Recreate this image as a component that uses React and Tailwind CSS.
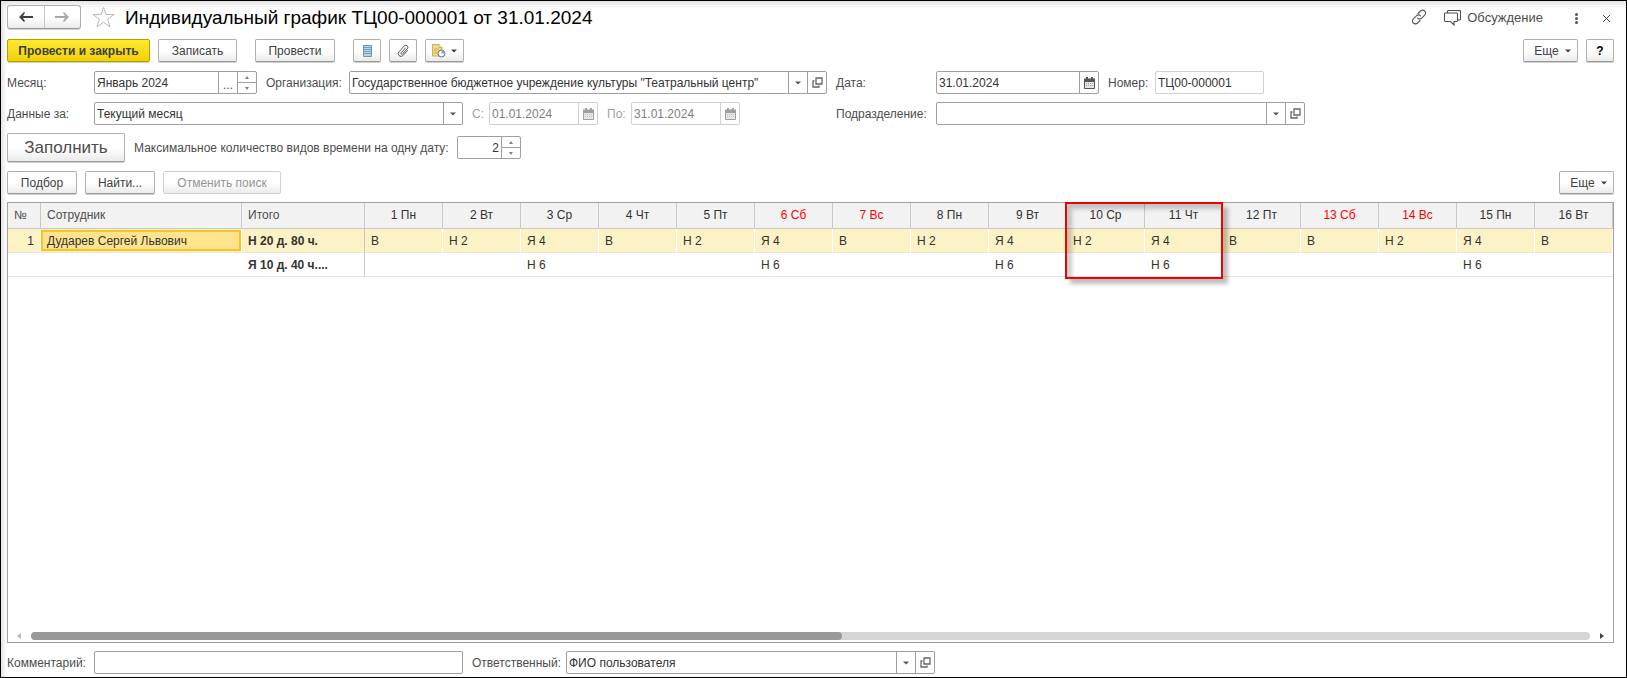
import clsx from "clsx";

const days = [
  { title: "1 Пн", top: "В" },
  { title: "2 Вт", top: "Н 2" },
  { title: "3 Ср", top: "Я 4", bottom: "Н 6" },
  { title: "4 Чт", top: "В" },
  { title: "5 Пт", top: "Н 2" },
  { title: "6 Сб", top: "Я 4", bottom: "Н 6", weekend: true },
  { title: "7 Вс", top: "В", weekend: true },
  { title: "8 Пн", top: "Н 2" },
  { title: "9 Вт", top: "Я 4", bottom: "Н 6" },
  { title: "10 Ср", top: "Н 2", marked: true },
  { title: "11 Чт", top: "Я 4", bottom: "Н 6" },
  { title: "12 Пт", top: "В" },
  { title: "13 Сб", top: "В", weekend: true },
  { title: "14 Вс", top: "Н 2", weekend: true },
  { title: "15 Пн", top: "Я 4", bottom: "Н 6" },
  { title: "16 Вт", top: "В" },
];

function CaretDown({ className }) {
  return (
    <svg width="6" height="4" viewBox="0 0 6 4" className={className} aria-hidden="true">
      <path d="M0 0.5h6L3 3.5z" fill="currentColor" />
    </svg>
  );
}

function CalendarIcon() {
  return (
    <svg width="11" height="12" viewBox="0 0 11 12" aria-hidden="true">
      <path d="M0.5 4.5h10v7h-10z" fill="#e6e6e6" stroke="currentColor" />
      <path d="M0 1.5h11V5H0zM2 0h2v2H2zM7 0h2v2H7z" fill="currentColor" />
      <path d="M2 6.5h7M2 8.5h7" stroke="currentColor" strokeOpacity="0.5" strokeDasharray="1 1" />
    </svg>
  );
}

function OpenIcon() {
  return (
    <svg width="11" height="11" viewBox="0 0 11 11" fill="none" stroke="#666" strokeWidth="1.3" aria-hidden="true">
      <path d="M4 1h6v6H4z" />
      <path d="M2.5 4H1v6h6V8.5" />
    </svg>
  );
}

function Button({ className, children, ...props }) {
  return (
    <button
      type="button"
      className={clsx(
        "flex shrink-0 items-center justify-center rounded-[2px] border border-[#b0b0b0] border-b-[#9a9a9a] bg-linear-to-b from-white from-50% to-[#ebebeb] shadow-[0_1px_0_#d0d0d0]",
        "disabled:border-[#d0d0d0] disabled:text-[#949494] disabled:shadow-none",
        className
      )}
      {...props}
    >
      {children}
    </button>
  );
}

function Field({ className, muted, children }) {
  return (
    <div
      className={clsx(
        "flex h-[23px] shrink-0 overflow-hidden rounded-[2px] border bg-white",
        muted ? "border-[#d0d0d0] text-[#808080]" : "border-[#a0a0a0] text-[#333]",
        className
      )}
    >
      {children}
    </div>
  );
}

function TextInput({ className, ...props }) {
  return <input type="text" className={clsx("min-w-0 flex-1 px-[2px] outline-none", className)} {...props} />;
}

function FieldButton({ label, muted, children }) {
  return (
    <button
      type="button"
      aria-label={label}
      disabled={muted}
      className={clsx(
        "flex w-[19px] shrink-0 items-center justify-center border-l",
        muted ? "border-[#d0d0d0] text-[#a0a0a0]" : "border-[#a0a0a0] text-[#555]"
      )}
    >
      {children}
    </button>
  );
}

function Spinner() {
  return (
    <div className="flex w-[19px] shrink-0 flex-col border-l border-[#a0a0a0] text-[#808080]">
      <button type="button" aria-label="Больше" className="flex flex-1 items-center justify-center border-b border-[#a0a0a0]">
        <svg width="4" height="3" viewBox="0 0 4 3" aria-hidden="true">
          <path d="M0 3h4L2 0z" fill="currentColor" />
        </svg>
      </button>
      <button type="button" aria-label="Меньше" className="flex flex-1 items-center justify-center">
        <svg width="4" height="3" viewBox="0 0 4 3" aria-hidden="true">
          <path d="M0 0h4L2 3z" fill="currentColor" />
        </svg>
      </button>
    </div>
  );
}

function TitleBar() {
  return (
    <header className="flex h-6 items-center">
      <div className="flex h-6 w-[74px] rounded-[3px] border border-[#b0b0b0] border-b-[#9a9a9a] bg-linear-to-b from-white from-50% to-[#ebebeb] shadow-[0_1px_0_#d0d0d0]">
        <button type="button" aria-label="Назад" className="flex flex-1 items-center justify-center border-r border-[#c8c8c8]">
          <svg width="14" height="10" viewBox="0 0 14 10" aria-hidden="true">
            <path d="M5 0 0 5l5 5 1-1-2-3h10V4H4l2-3z" fill="#404040" />
          </svg>
        </button>
        <button type="button" aria-label="Вперед" className="flex flex-1 items-center justify-center">
          <svg width="14" height="10" viewBox="0 0 14 10" aria-hidden="true">
            <path d="m9 0 5 5-5 5-1-1 2-3H0V4h10L8 1z" fill="#a8a8a8" />
          </svg>
        </button>
      </div>
      <button type="button" aria-label="В избранное" className="ml-[11px]">
        <svg width="23" height="22" viewBox="0 0 23 22" fill="#fff" stroke="#b4bac0" aria-hidden="true">
          <path d="m11.5 1.500 2.500 7h8l-6.300 4.700 2.300 7.600-6.500-4.500-6.500 4.500 2.300-7.600L1 8.500h8z" />
        </svg>
      </button>
      <h1 className="ml-[10px] flex-1 pt-[2px] text-[19px] leading-[22px] whitespace-nowrap text-black">
        Индивидуальный график ТЦ00-000001 от 31.01.2024
      </h1>
      <button type="button" aria-label="Получить ссылку">
        <svg width="16" height="16" viewBox="0 0 16 16" fill="none" stroke="#555" strokeWidth="1.1" strokeLinecap="round" aria-hidden="true">
          <path d="m7 4.500 2.500-2.500a2.900 2.900 0 0 1 4.200 0 2.900 2.900 0 0 1 0 4.200l-3 3a2.900 2.900 0 0 1-4.200 0" />
          <path d="m9 11.500-2.500 2.500a2.900 2.900 0 0 1-4.200 0 2.900 2.900 0 0 1 0-4.200l3-3a2.900 2.900 0 0 1 4.200 0" />
        </svg>
      </button>
      <button type="button" className="ml-[17px] flex items-center gap-[6px] pt-[2px] text-[13px] text-[#4d4d4d]">
        <svg width="17" height="16" viewBox="0 0 17 16" fill="none" stroke="#4d4d4d" strokeWidth="1.1" aria-hidden="true">
          <path d="M3.500 3V1.500q0-1 1-1h11q1 0 1 1V9q0 1-1 1h-2" />
          <path d="M1.500 3h11q1 0 1 1v6.500q0 1-1 1H10V15l-3.500-3.500h-5q-1 0-1-1V4q0-1 1-1z" fill="#fff" />
        </svg>
        Обсуждение
      </button>
      <button type="button" aria-label="Меню" className="ml-8 flex flex-col gap-px pt-[2px]">
        <span className="size-[3px] rounded-full bg-[#555]" />
        <span className="size-[3px] rounded-full bg-[#555]" />
        <span className="size-[3px] rounded-full bg-[#555]" />
      </button>
      <button type="button" aria-label="Закрыть" className="mr-1 ml-[25px] pt-[2px]">
        <svg width="7" height="7" viewBox="0 0 7 7" stroke="#444" aria-hidden="true">
          <path d="m0 0 7 7M7 0 0 7" />
        </svg>
      </button>
    </header>
  );
}

function Toolbar() {
  return (
    <div className="mt-[10px] flex items-center">
      <button
        type="button"
        className="h-[23px] w-[143px] rounded-[2px] border border-[#b59f00] bg-linear-to-b from-[#ffe82e] to-[#f2d100] font-bold whitespace-nowrap text-[#404040] shadow-[0_1px_0_#d0d0d0]"
      >
        Провести и закрыть
      </button>
      <Button className="ml-2 h-[23px] w-[79px]">Записать</Button>
      <Button className="ml-[18px] h-[23px] w-[80px]">Провести</Button>
      <Button className="ml-[18px] h-[23px] w-7" aria-label="Движения документа">
        <svg width="9" height="12" viewBox="0 0 9 12" aria-hidden="true">
          <path d="M0.500 0.500h8v11h-8z" fill="#b9d3e6" stroke="#6d93b0" />
          <path d="M1 2.500h7M1 4.500h7M1 6.500h7M1 8.500h7" stroke="#6d93b0" strokeOpacity="0.8" />
        </svg>
      </Button>
      <Button className="ml-2 h-[23px] w-7" aria-label="Присоединенные файлы">
        <svg width="12" height="13" viewBox="0 0 12 13" fill="none" stroke="#555" strokeLinecap="round" aria-hidden="true">
          <path d="m8.500 4-4.300 4.700a.9.900 0 0 0 1.300 1.300l4.800-5.300a2 2 0 0 0-3-2.800L2 7.800a2.700 2.700 0 0 0 4 3.700L10.500 6.500" />
        </svg>
      </Button>
      <Button className="ml-2 h-[23px] w-[39px] gap-[5px]" aria-label="Создать на основании">
        <svg width="14" height="14" viewBox="0 0 14 14" aria-hidden="true">
          <path d="M0.500 0.500h6.500l3 3v8.500h-9.500z" fill="#f3d98a" stroke="#d0b050" />
          <path d="M7 0.500v3h3" fill="#fff3c4" stroke="#d0b050" />
          <path d="M2 5h5M2 7h3M2 9h3" stroke="#d0b050" />
          <circle cx="9.500" cy="9.500" r="3.500" fill="#fff" stroke="#5a7086" />
          <path d="M9.500 9.500V6a3.500 3.500 0 0 1 3.500 3.500z" fill="#7ba7d0" />
        </svg>
        <CaretDown />
      </Button>
      <Button className="ml-auto h-[23px] w-[55px] gap-[6px] pl-1">
        Еще <CaretDown />
      </Button>
      <Button className="ml-2 h-[23px] w-7 font-bold text-black">?</Button>
    </div>
  );
}

function HeaderFields() {
  return (
    <div className="mt-[9px] grid grid-cols-[829px_1fr] gap-y-2 text-[#4d4d4d]">
      <div className="flex items-center">
        <label htmlFor="month" className="w-[87px] shrink-0">Месяц:</label>
        <Field className="w-[163px]">
          <TextInput id="month" defaultValue="Январь 2024" />
          <FieldButton label="Выбрать месяц">
            <span className="pt-1">...</span>
          </FieldButton>
          <Spinner />
        </Field>
        <label htmlFor="org" className="ml-[9px] w-[83px] shrink-0">Организация:</label>
        <Field className="w-[478px]">
          <TextInput id="org" defaultValue={'Государственное бюджетное учреждение культуры "Театральный центр"'} />
          <FieldButton label="Выбрать организацию"><CaretDown /></FieldButton>
          <FieldButton label="Открыть организацию"><OpenIcon /></FieldButton>
        </Field>
      </div>
      <div className="flex items-center">
        <label htmlFor="date" className="w-[100px] shrink-0">Дата:</label>
        <Field className="w-[163px]">
          <TextInput id="date" defaultValue="31.01.2024" />
          <FieldButton label="Календарь"><CalendarIcon /></FieldButton>
        </Field>
        <label htmlFor="number" className="ml-[9px] w-[47px] shrink-0">Номер:</label>
        <Field className="w-[109px] border-[#d0d0d0]">
          <TextInput id="number" defaultValue="ТЦ00-000001" />
        </Field>
      </div>
      <div className="flex items-center">
        <label htmlFor="source" className="w-[87px] shrink-0">Данные за:</label>
        <Field className="w-[369px]">
          <select id="source" className="flex-1 appearance-none px-[2px] outline-none">
            <option>Текущий месяц</option>
          </select>
          <span className="pointer-events-none flex w-[19px] items-center justify-center border-l border-[#a0a0a0] text-[#555]">
            <CaretDown />
          </span>
        </Field>
        <label htmlFor="from" className="ml-[9px] w-[17px] shrink-0 text-[#a0a0a0]">С:</label>
        <Field className="w-[109px]" muted>
          <TextInput id="from" defaultValue="01.01.2024" disabled />
          <FieldButton label="Календарь" muted><CalendarIcon /></FieldButton>
        </Field>
        <label htmlFor="to" className="ml-[9px] w-[24px] shrink-0 text-[#a0a0a0]">По:</label>
        <Field className="w-[109px]" muted>
          <TextInput id="to" defaultValue="31.01.2024" disabled />
          <FieldButton label="Календарь" muted><CalendarIcon /></FieldButton>
        </Field>
      </div>
      <div className="flex items-center">
        <label htmlFor="department" className="w-[100px] shrink-0">Подразделение:</label>
        <Field className="w-[369px]">
          <TextInput id="department" />
          <FieldButton label="Выбрать подразделение"><CaretDown /></FieldButton>
          <FieldButton label="Открыть подразделение"><OpenIcon /></FieldButton>
        </Field>
      </div>
    </div>
  );
}

function Schedule() {
  const cell = "truncate pl-[6px] text-left";
  return (
    <div className="mt-2 flex flex-1 flex-col border border-[#a0a0a0] bg-white text-[#333]">
      <table className="w-full table-fixed border-separate border-spacing-0">
        <colgroup>
          <col className="w-[33px]" />
          <col className="w-[201px]" />
          <col className="w-[123px]" />
          {days.map((day) => (
            <col key={day.title} />
          ))}
        </colgroup>
        <thead>
          <tr className="h-[26px] text-[#4d4d4d] [&>th]:border-r [&>th]:border-b [&>th]:border-[#c8c8c8] [&>th]:bg-[#f2f2f2] [&>th]:pb-[2px] [&>th]:font-normal">
            <th className={cell}>№</th>
            <th className={cell}>Сотрудник</th>
            <th className={cell}>Итого</th>
            {days.map((day) => (
              <th key={day.title} className={clsx("relative", day.weekend ? "text-[#ff0000]" : "text-[#333]")}>
                {day.title}
                {day.marked && (
                  <span className="pointer-events-none absolute -top-px -left-[2px] z-10 h-[77px] w-[calc(200%+4px)] border-2 border-[#f00000] shadow-[5px_5px_4px_rgba(0,0,0,0.25),inset_5px_5px_4px_rgba(0,0,0,0.2)]" />
                )}
              </th>
            ))}
          </tr>
        </thead>
        <tbody>
          <tr className="h-6 [&>td]:border-r [&>td]:border-b [&>td]:border-r-white [&>td]:border-b-[#e4e4e4] [&>td]:bg-[#fdf1c6]">
            <td className="pr-[6px] text-right">1</td>
            <td className="p-0">
              <div className="h-[21px] border-2 border-[#f9c51d] bg-[#ffe48f] pl-1 leading-[18px]">Дударев Сергей Львович</div>
            </td>
            <td className={clsx(cell, "border-r-[#c8c8c8]! font-bold")}>Н 20 д. 80 ч.</td>
            {days.map((day) => (
              <td key={day.title} className={cell}>{day.top}</td>
            ))}
          </tr>
          <tr className="h-6 [&>td]:border-b [&>td]:border-[#e4e4e4]">
            <td />
            <td />
            <td className={clsx(cell, "border-r border-r-[#c8c8c8]! font-bold")}>Я 10 д. 40 ч....</td>
            {days.map((day) => (
              <td key={day.title} className={cell}>{day.bottom}</td>
            ))}
          </tr>
        </tbody>
      </table>
      <div className="mt-auto flex items-center pr-[9px] pb-[2px] pl-[9px]">
        <svg width="4" height="6" viewBox="0 0 4 6" aria-hidden="true">
          <path d="M4 0v6L0 3z" fill="#b8b8b8" />
        </svg>
        <div className="mr-[10px] ml-[10px] h-2 flex-1 rounded-full bg-[#d5d5d5]">
          <div className="h-2 w-[52%] rounded-full bg-[#999]" />
        </div>
        <svg width="4" height="6" viewBox="0 0 4 6" aria-hidden="true">
          <path d="M0 0v6l4-3z" fill="#444" />
        </svg>
      </div>
    </div>
  );
}

export default function App() {
  return (
    <div className="flex min-h-screen flex-col border border-black bg-white bg-[linear-gradient(to_right,#e4e4e4,transparent_6px),linear-gradient(to_bottom,#e4e4e4,transparent_8px)] px-[6px] pt-1 pr-3 pb-[3px] font-['Liberation_Sans',Arial,sans-serif] text-[12px] leading-4 text-[#404040]">
      <TitleBar />
      <Toolbar />
      <HeaderFields />
      <div className="mt-2 flex items-center text-[#4d4d4d]">
        <Button className="h-[29px] w-[118px] text-[17px]">Заполнить</Button>
        <label htmlFor="limit" className="ml-[9px] w-[323px] whitespace-nowrap">
          Максимальное количество видов времени на одну дату:
        </label>
        <Field className="w-16">
          <TextInput id="limit" defaultValue="2" className="text-right" />
          <Spinner />
        </Field>
      </div>
      <div className="mt-[9px] flex items-center gap-2">
        <Button className="h-[23px] w-[70px]">Подбор</Button>
        <Button className="h-[23px] w-[70px]">Найти...</Button>
        <Button className="h-[23px] w-[118px]" disabled>Отменить поиск</Button>
        <Button className="ml-auto h-[23px] w-[55px] gap-[6px] pl-1">
          Еще <CaretDown />
        </Button>
      </div>
      <Schedule />
      <footer className="mt-2 flex items-center text-[#4d4d4d]">
        <label htmlFor="comment" className="w-[87px] shrink-0">Комментарий:</label>
        <Field className="w-[369px]">
          <TextInput id="comment" />
        </Field>
        <label htmlFor="responsible" className="ml-[9px] w-[94px] shrink-0">Ответственный:</label>
        <Field className="w-[369px]">
          <TextInput id="responsible" defaultValue="ФИО пользователя" />
          <FieldButton label="Выбрать ответственного"><CaretDown /></FieldButton>
          <FieldButton label="Открыть ответственного"><OpenIcon /></FieldButton>
        </Field>
      </footer>
    </div>
  );
}
